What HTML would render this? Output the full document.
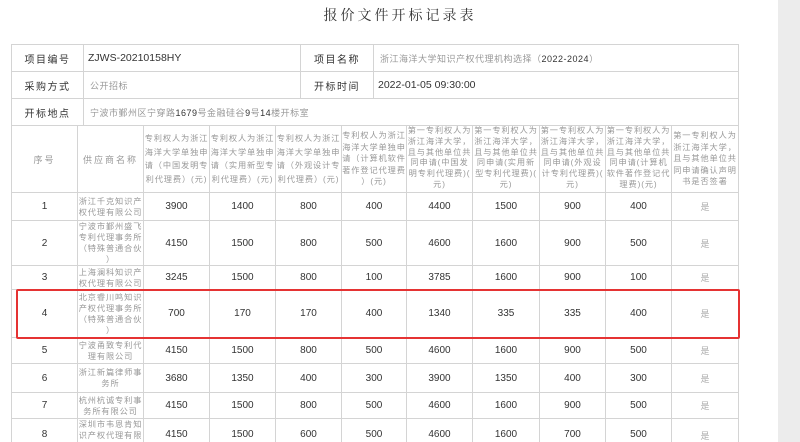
<!DOCTYPE html>
<html><head><meta charset="utf-8"><style>
html,body{margin:0;padding:0;width:800px;height:442px;overflow:hidden;background:#fff;}
body{position:relative;font-family:"Liberation Sans","Noto Sans CJK SC",sans-serif;}
.side{position:absolute;left:778px;top:0;width:22px;height:442px;background:#ececec;}
.title{position:absolute;left:0;width:800px;top:5px;text-align:center;font-size:14px;color:#333;letter-spacing:3px;font-family:"Liberation Serif","Noto Serif CJK SC",serif;}
table{position:absolute;left:11px;border-collapse:collapse;table-layout:fixed;}
td{border:1px solid #d4d4d4;padding:0;text-align:center;vertical-align:middle;overflow:hidden;white-space:nowrap;}
.top td{height:26px;font-size:10px;color:#333;}
.top .l{letter-spacing:1.5px;}
.top .g{color:#999;text-align:left;padding-left:6px;font-size:9px;letter-spacing:0.5px;}
.top .n{color:#333;text-align:left;padding-left:4px;font-size:10.5px;}
.main td{font-size:10px;color:#333;}
.main td.h{font-size:8.2px;color:#999;line-height:13.5px;letter-spacing:0.9px;}
.main td.h6{font-size:8.2px;color:#999;line-height:10.8px;letter-spacing:0.9px;vertical-align:top;padding-top:0;}
.main td.s{font-size:8.2px;color:#999;line-height:11px;letter-spacing:0.9px;}
.main td.s0{font-size:9px;color:#999;letter-spacing:2px;}
.main td.y{color:#aaa;font-size:9px;}
.hd{height:66px;overflow:hidden;}
.red{position:absolute;left:16px;top:289px;width:720px;height:46px;border:2px solid #e53333;border-radius:2px;}
</style></head><body>
<div class="side"></div>
<div class="title">报价文件开标记录表</div>
<table class="top" style="top:44px;width:727px;">
<col style="width:72px"><col style="width:217px"><col style="width:73px"><col style="width:365px">
<tr><td class="l">项目编号</td><td class="n">ZJWS-20210158HY</td><td class="l">项目名称</td><td class="g">浙江海洋大学知识产权代理机构选择（<span style="color:#333">2022-2024</span>）</td></tr>
<tr><td class="l">采购方式</td><td class="g">公开招标</td><td class="l">开标时间</td><td class="n">2022-01-05 09:30:00</td></tr>
<tr><td class="l">开标地点</td><td class="g" colspan="3">宁波市鄞州区宁穿路<span style="color:#333">1679</span>号金融硅谷<span style="color:#333">9</span>号<span style="color:#333">14</span>楼开标室</td></tr>
</table>
<table class="main" style="top:125px;width:727px;">
<col style="width:66px"><col style="width:66px"><col style="width:66px"><col style="width:66px"><col style="width:66px"><col style="width:65px"><col style="width:66px"><col style="width:67px"><col style="width:66px"><col style="width:66px"><col style="width:67px">
<tr style="height:67px"><td class="s0">序号</td><td class="s0">供应商名称</td>
<td class="h">专利权人为浙江<br>海洋大学单独申<br>请（中国发明专<br>利代理费）(元)</td>
<td class="h">专利权人为浙江<br>海洋大学单独申<br>请（实用新型专<br>利代理费）(元)</td>
<td class="h">专利权人为浙江<br>海洋大学单独申<br>请（外观设计专<br>利代理费）(元)</td>
<td class="h" style="line-height:11.5px">专利权人为浙江<br>海洋大学单独申<br>请（计算机软件<br>著作登记代理费<br>）(元)</td>
<td class="h6"><div class="hd">第一专利权人为<br>浙江海洋大学，<br>且与其他单位共<br>同申请(中国发<br>明专利代理费)(<br>元)</div></td>
<td class="h6"><div class="hd">第一专利权人为<br>浙江海洋大学，<br>且与其他单位共<br>同申请(实用新<br>型专利代理费)(<br>元)</div></td>
<td class="h6"><div class="hd">第一专利权人为<br>浙江海洋大学，<br>且与其他单位共<br>同申请(外观设<br>计专利代理费)(<br>元)</div></td>
<td class="h6"><div class="hd">第一专利权人为<br>浙江海洋大学，<br>且与其他单位共<br>同申请(计算机<br>软件著作登记代<br>理费)(元)</div></td>
<td class="h" style="line-height:11.5px">第一专利权人为<br>浙江海洋大学，<br>且与其他单位共<br>同申请确认声明<br>书是否签署</td></tr>
<tr style="height:28px"><td>1</td><td class="s">浙江千克知识产<br>权代理有限公司</td><td>3900</td><td>1400</td><td>800</td><td>400</td><td>4400</td><td>1500</td><td>900</td><td>400</td><td class="y">是</td></tr>
<tr style="height:45px"><td>2</td><td class="s">宁波市鄞州盛飞<br>专利代理事务所<br>（特殊普通合伙<br>）</td><td>4150</td><td>1500</td><td>800</td><td>500</td><td>4600</td><td>1600</td><td>900</td><td>500</td><td class="y">是</td></tr>
<tr style="height:24px"><td>3</td><td class="s">上海澜科知识产<br>权代理有限公司</td><td>3245</td><td>1500</td><td>800</td><td>100</td><td>3785</td><td>1600</td><td>900</td><td>100</td><td class="y">是</td></tr>
<tr style="height:48px"><td>4</td><td class="s">北京睿川鸣知识<br>产权代理事务所<br>（特殊普通合伙<br>）</td><td>700</td><td>170</td><td>170</td><td>400</td><td>1340</td><td>335</td><td>335</td><td>400</td><td class="y">是</td></tr>
<tr style="height:26px"><td>5</td><td class="s">宁波甬致专利代<br>理有限公司</td><td>4150</td><td>1500</td><td>800</td><td>500</td><td>4600</td><td>1600</td><td>900</td><td>500</td><td class="y">是</td></tr>
<tr style="height:29px"><td>6</td><td class="s">浙江新篇律师事<br>务所</td><td>3680</td><td>1350</td><td>400</td><td>300</td><td>3900</td><td>1350</td><td>400</td><td>300</td><td class="y">是</td></tr>
<tr style="height:26px"><td>7</td><td class="s">杭州杭诚专利事<br>务所有限公司</td><td>4150</td><td>1500</td><td>800</td><td>500</td><td>4600</td><td>1600</td><td>900</td><td>500</td><td class="y">是</td></tr>
<tr style="height:40px"><td style="vertical-align:top;padding-top:10px">8</td><td class="s" style="vertical-align:top">深圳市韦恩肯知<br>识产权代理有限</td><td style="vertical-align:top;padding-top:10px">4150</td><td style="vertical-align:top;padding-top:10px">1500</td><td style="vertical-align:top;padding-top:10px">600</td><td style="vertical-align:top;padding-top:10px">500</td><td style="vertical-align:top;padding-top:10px">4600</td><td style="vertical-align:top;padding-top:10px">1600</td><td style="vertical-align:top;padding-top:10px">700</td><td style="vertical-align:top;padding-top:10px">500</td><td class="y" style="vertical-align:top;padding-top:10px">是</td></tr>
</table>
<div class="red"></div>
</body></html>
